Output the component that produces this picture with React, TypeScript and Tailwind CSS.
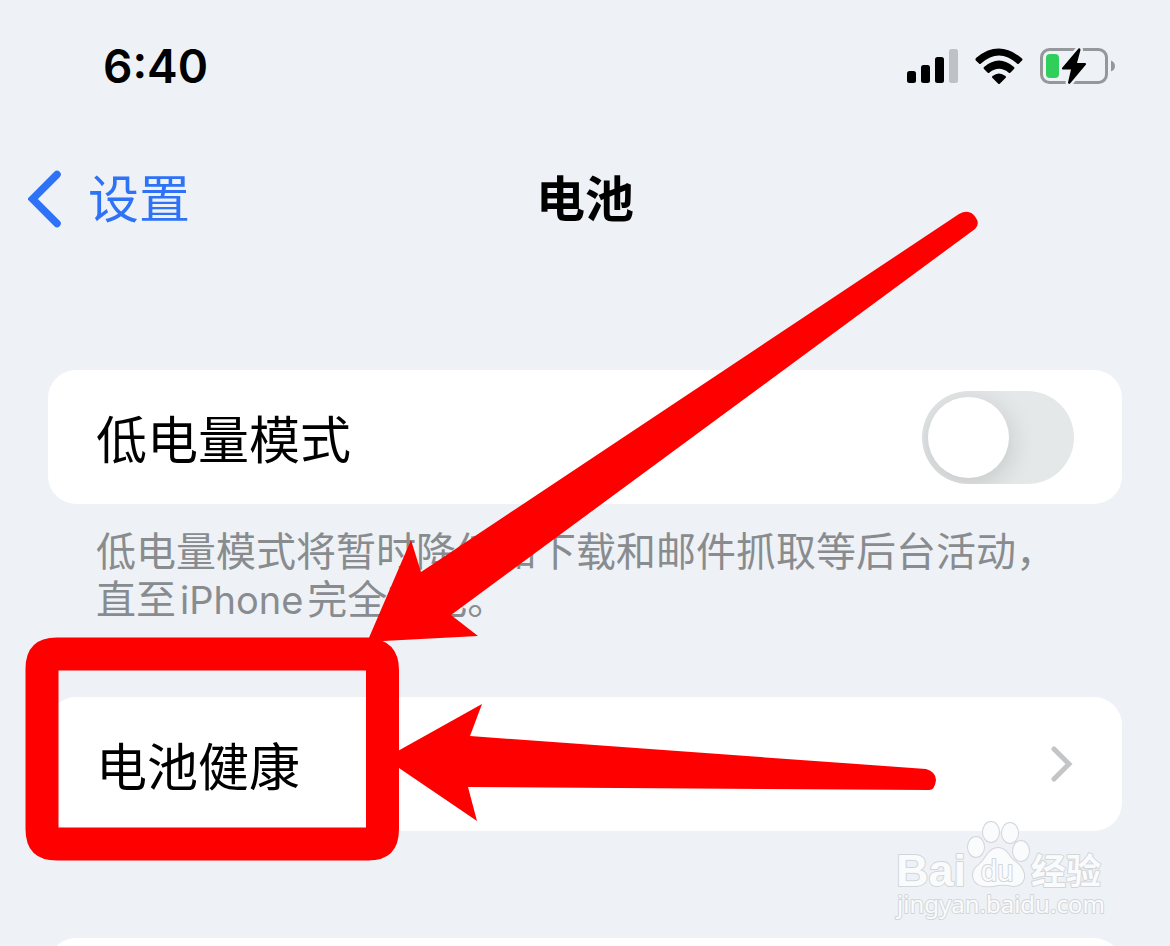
import type { ReactNode } from "react";

export default function App() {
  return (
    <div className="relative flex h-screen flex-col overflow-hidden bg-[#eef2f6] font-[Inter,'Noto_Sans_CJK_SC',sans-serif] text-black">
      <StatusBar />

      <header className="grid h-[136px] shrink-0 grid-cols-3 items-center px-7">
        <a href="#" className="flex items-center gap-[26px] text-[51px] leading-[64px] text-[#2e72f7]">
          <svg viewBox="0 0 34 60" className="h-[60px] w-[34px]" fill="none">
            <path d="M29 4.500 4.500 29 29 53.500" stroke="currentColor" strokeWidth="7.500" strokeLinecap="round" />
          </svg>
          设置
        </a>
        <h1 className="text-center text-[49px] leading-[64px] font-bold">电池</h1>
      </header>

      <main className="flex grow flex-col px-12 pt-[102px]">
        <Card>
          <label htmlFor="low-power" className="pt-2 text-[51px] leading-[64px]">
            低电量模式
          </label>
          <input
            id="low-power"
            type="checkbox"
            role="switch"
            className="h-[93px] w-[152px] appearance-none overflow-hidden rounded-full bg-[#e5e8e9] p-1.5 before:block before:size-[81px] before:rounded-full before:bg-white before:shadow-[0_6px_28px_rgba(0,0,0,0.16)]"
          />
        </Card>
        <p className="mt-6 px-12 text-[40px] leading-[48px] text-[#898c8f]">
          低电量模式将暂时降低如下载和邮件抓取等后台活动，
          <br />
          直至<span className="mx-1 text-[38px]">iPhone</span>完全充电。
        </p>

        <a href="#" className="mt-[73px] block">
          <Card>
            <span className="pt-2 text-[51px] leading-[64px]">电池健康</span>
            <svg viewBox="0 0 24 38" className="h-[38px] w-6" fill="none">
              <path d="M4 4 19 19 4 34" stroke="#c4c5c7" strokeWidth="5" strokeLinecap="round" />
            </svg>
          </Card>
        </a>

        <section className="mt-[107px] h-[134px] shrink-0 rounded-[28px] bg-white" />
      </main>

      <Annotations />
      <Watermark />
    </div>
  );
}

function Card({ children }: { children: ReactNode }) {
  return (
    <div className="flex h-[134px] items-center justify-between rounded-[28px] bg-white px-12">
      {children}
    </div>
  );
}

function StatusBar() {
  return (
    <div className="flex h-[132px] shrink-0 items-center justify-between pr-[55px] pl-[103px]">
      <time className="text-[46px] leading-[56px] font-semibold">6:40</time>
      <div className="flex items-center gap-[17px]">
        <svg viewBox="0 0 51 36" className="h-9 w-[51px]">
          <rect x="0" y="23" width="9" height="12" rx="2.500" />
          <rect x="14" y="17" width="9" height="18" rx="2.500" />
          <rect x="28" y="9" width="9" height="26" rx="2.500" />
          <rect x="42" y="1" width="9" height="34" rx="2.500" fill="#bfc2c5" />
        </svg>
        <svg viewBox="0 0 48 36" className="h-9 w-12">
          <path d="M1 10Q24-9 47 10.500Q48 11.500 47 12.500L44 15.500Q43 16.500 42 15.500Q24-.5 6 15.500Q5 16.500 4 15.500L.8 12.500Q0 11.500 1 10Z" />
          <path d="M9 19Q24 6 39 19Q40 20 39 21L35.500 24.500Q34.500 25.500 33.500 24.500Q24 17 14.500 24.500Q13.500 25.500 12.500 24.500L9 21Q8 20 9 19Z" />
          <path d="M17.500 28Q24 23 30.500 28Q31.500 29 30.500 30L25 35.500Q24 36.500 23 35.500L17.500 30Q16.500 29 17.500 28Z" />
        </svg>
        <svg viewBox="0 0 75 38" className="h-[38px] w-[75px]">
          <rect x="1.500" y="2.500" width="65" height="33" rx="8" fill="none" stroke="#95989b" strokeWidth="3" />
          <rect x="6" y="7" width="13" height="24" rx="4" fill="#30cf5b" />
          <path d="M71 13.500Q75 15 75 19T71 24.500Z" fill="#95989b" />
          <path
            d="M38.500 1.500 22 21Q21.500 22.500 23 22.500H31L28 35.500Q28.500 38 30.500 36L46 17.500Q46.500 16 45 16H37L40.500 3Q40.500.500 38.500 1.500Z"
            stroke="#eef2f6"
            strokeWidth="5"
            paintOrder="stroke"
          />
        </svg>
      </div>
    </div>
  );
}

function Annotations() {
  return (
    <svg
      viewBox="0 0 1170 946"
      className="pointer-events-none absolute inset-x-0 top-0 w-full"
      fill="#ff0000"
      aria-hidden="true"
    >
      <path
        fillRule="evenodd"
        d="M57 637.500H368Q399 640 399 670V829Q399 860.500 368 860.500H57Q25.500 860.500 25.500 829V669Q25.500 637.500 57 637.500ZM58.500 670.500V827.500H366V670.500Z"
      />
      <path d="M368 640 411 540 421 572 959 214Q970 208 976 218Q980 224 975 229L451 615 478 636 383 641Z" />
      <path d="M396 752 482 704 470 736 926 769Q936 772 936 780Q935 790 929 790L468 787 477 821 396 766Z" />
    </svg>
  );
}

function Watermark() {
  return (
    <svg
      viewBox="0 0 220 110"
      className="pointer-events-none absolute right-[58px] bottom-[20px] h-[110px] w-[220px]"
      fill="#fafbfd"
      stroke="#d3d6d9"
      strokeWidth="2"
      strokeLinejoin="round"
      paintOrder="stroke"
    >
      <text x="4" y="70" className="font-['Liberation_Sans',sans-serif] text-[45px] font-bold">
        Bai
      </text>
      <ellipse cx="84" cy="31" rx="8" ry="10" />
      <ellipse cx="99" cy="16" rx="8" ry="10" />
      <ellipse cx="118" cy="17" rx="8" ry="10" />
      <ellipse cx="129" cy="35" rx="8" ry="10" />
      <path d="M106 32Q112 32 117 39Q119 43 125 47Q133 54 132 62Q130 70 121 70Q113 68 106 69Q99 71 91 70Q81 68 81 59Q81 53 88 48Q92 44 95 39Q100 32 106 32Z" />
      <text x="89" y="65" className="font-['Liberation_Sans',sans-serif] text-[29px]">
        du
      </text>
      <text x="139" y="68" className="font-['Noto_Sans_CJK_SC',sans-serif] text-[35px] font-bold">
        经验
      </text>
      <text x="5" y="97" className="font-['Noto_Sans',sans-serif] text-[24px]">
        jingyan.baidu.com
      </text>
    </svg>
  );
}
